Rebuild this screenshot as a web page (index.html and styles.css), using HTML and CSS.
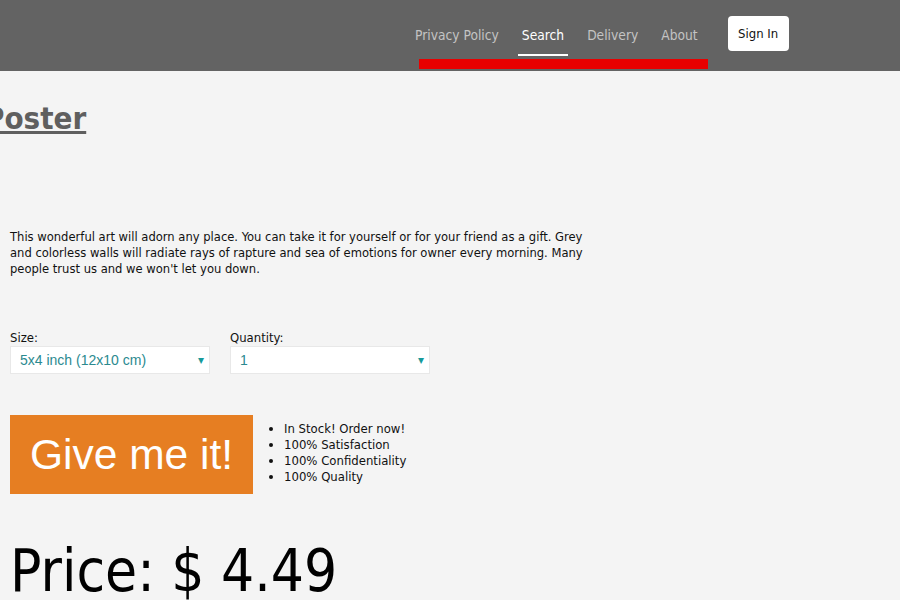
FILE: index.html
```html
<!DOCTYPE html>
<html>
<head>
<meta charset="utf-8">
<link rel="stylesheet" href="styles.css">
</head>
<body>
<header class="topbar">
  <nav class="nav">
    <a class="nav-link">Privacy Policy</a>
    <a class="nav-link active">Search</a>
    <a class="nav-link">Delivery</a>
    <a class="nav-link">About</a>
  </nav>
  <button class="signin">Sign In</button>
  <div class="redbar"></div>
</header>
<main class="content">
  <h1 class="title">Poster</h1>
  <p class="desc">This wonderful art will adorn any place. You can take it for yourself or for your friend as a gift. Grey and colorless walls will radiate rays of rapture and sea of emotions for owner every morning. Many people trust us and we won't let you down.</p>
  <div class="options">
    <div class="field">
      <label class="label">Size:</label>
      <div class="select"><span>5x4 inch (12x10 cm)</span><span class="arrow">&#9662;</span></div>
    </div>
    <div class="field">
      <label class="label">Quantity:</label>
      <div class="select"><span>1</span><span class="arrow">&#9662;</span></div>
    </div>
  </div>
  <div class="buy">
    <button class="give">Give me it!</button>
    <ul class="perks">
      <li>In Stock! Order now!</li>
      <li>100% Satisfaction</li>
      <li>100% Confidentiality</li>
      <li>100% Quality</li>
    </ul>
  </div>
  <div class="price">Price: $ 4.49</div>
</main>
</body>
</html>
```
FILE: styles.css
```css
html, body {
  margin: 0;
  padding: 0;
  background: #f4f4f4;
  font-family: "DejaVu Sans Condensed", "DejaVu Sans", sans-serif;
  overflow: hidden;
  height: 600px;
}
.topbar {
  position: relative;
  height: 71px;
  background: #636363;
  display: flex;
  align-items: flex-start;
  padding-left: 411px;
  box-sizing: border-box;
}
.nav {
  display: flex;
  gap: 15px;
  height: 71px;
}
.nav-link {
  display: block;
  color: #c4c4c4;
  font-size: 13.7px;
  padding: 27px 4px 0;
  height: 27px;
}
.nav-link.active {
  color: #ffffff;
  border-bottom: 2px solid #ffffff;
}
.signin {
  margin: 16px 0 0 26px;
  width: 61px;
  height: 35px;
  border: none;
  border-radius: 4px;
  background: #ffffff;
  color: #111;
  font-family: inherit;
  font-size: 13px;
  padding: 0;
}
.redbar {
  position: absolute;
  left: 419px;
  top: 59px;
  width: 289px;
  height: 10px;
  background: #e80000;
}
.content {
  padding: 0 10px;
}
.title {
  margin: 25px 0 0 -26px;
  font-size: 31px;
  font-weight: bold;
  color: #5f5f5f;
  text-decoration: underline;
  line-height: 44px;
}
.desc {
  margin: 89px 0 0;
  width: 585px;
  font-size: 12.85px;
  line-height: 16px;
  color: #111;
}
.options {
  display: flex;
  gap: 20px;
  margin-top: 53px;
}
.field {
  display: flex;
  flex-direction: column;
  width: 200px;
}
.label {
  font-size: 13px;
  line-height: 16px;
  color: #111;
}
.select {
  display: flex;
  justify-content: space-between;
  align-items: center;
  height: 28px;
  box-sizing: border-box;
  background: #fff;
  border: 1px solid #e8e8e8;
  padding: 0 5px 0 9px;
  font-family: "Liberation Sans", Arial, sans-serif;
  font-size: 14px;
  color: #2b8a8f;
}
.arrow {
  color: #179a9a;
  font-size: 12px;
}
.buy {
  display: flex;
  align-items: flex-start;
  margin-top: 41px;
}
.give {
  width: 243px;
  height: 79px;
  border: none;
  background: #e67e22;
  color: #fff;
  font-family: "Liberation Sans", Arial, sans-serif;
  font-size: 42.5px;
  padding: 0;
}
.perks {
  margin: 6px 0 0;
  padding-left: 31px;
  font-size: 13px;
  line-height: 16px;
  color: #111;
}
.price {
  margin-top: 44px;
  font-size: 58px;
  line-height: 66px;
  color: #000;
}
```
